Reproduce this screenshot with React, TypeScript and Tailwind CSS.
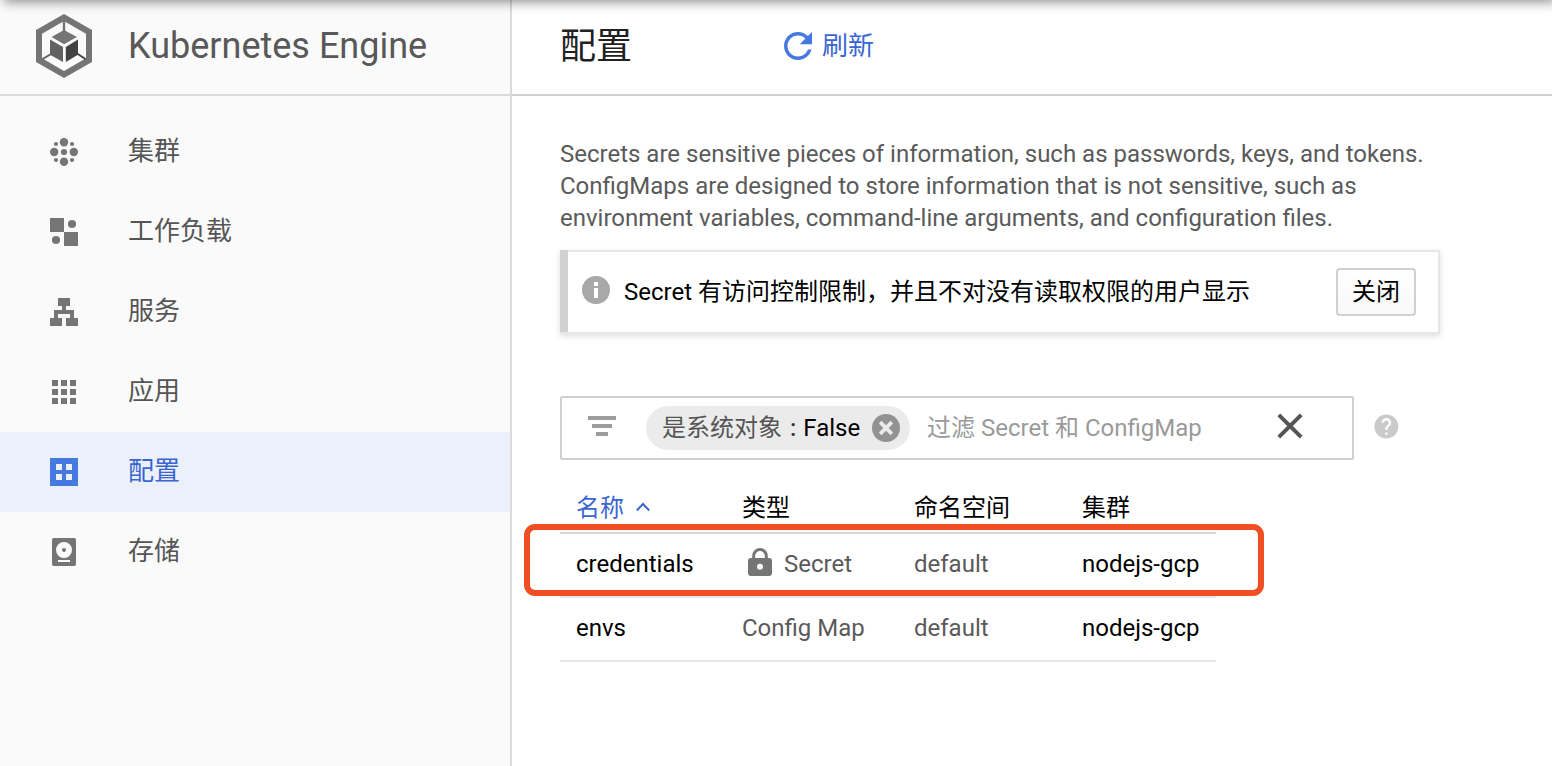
import type { ReactNode } from 'react';

const navItems: { label: string; active?: boolean; icon: ReactNode }[] = [
  {
    label: '集群',
    icon: (
      <>
        <circle cx="14" cy="4.2" r="4.2" />
        <circle cx="4.2" cy="14" r="4.2" />
        <circle cx="23.8" cy="14" r="4.2" />
        <circle cx="14" cy="23.8" r="4.2" />
        <circle cx="14" cy="14" r="3.1" />
        <circle cx="6" cy="6" r="2.1" />
        <circle cx="22" cy="6" r="2.1" />
        <circle cx="6" cy="22" r="2.1" />
        <circle cx="22" cy="22" r="2.1" />
      </>
    ),
  },
  {
    label: '工作负载',
    icon: (
      <>
        <path d="M0 0h14v14H0zM14 14h14v14H14z" />
        <circle cx="22" cy="6" r="4.1" />
        <circle cx="6" cy="22" r="4.1" />
      </>
    ),
  },
  {
    label: '服务',
    icon: <path d="M8 0h12v8h-4v4h8v8h4v8H16v-8h4v-4H8v4h4v8H0v-8h4v-8h8V8H8z" />,
  },
  {
    label: '应用',
    icon: (
      <path d="M2 2h6v6H2zM11 2h6v6h-6zM20 2h6v6h-6zM2 11h6v6H2zM11 11h6v6h-6zM20 11h6v6h-6zM2 20h6v6H2zM11 20h6v6h-6zM20 20h6v6h-6z" />
    ),
  },
  {
    label: '配置',
    active: true,
    icon: (
      <path
        fillRule="evenodd"
        d="M0 0h28v28H0zM6 6v6h6V6zM16 6v6h6V6zM6 16v6h6v-6zM16 16v6h6v-6z"
      />
    ),
  },
  {
    label: '存储',
    icon: (
      <path
        fillRule="evenodd"
        d="M4 0h20a2 2 0 0 1 2 2v24a2 2 0 0 1-2 2H4a2 2 0 0 1-2-2V2a2 2 0 0 1 2-2zM14 4a8 8 0 1 0 0 16a8 8 0 1 0 0-16zM14 10a2 2 0 1 1 0 4a2 2 0 1 1 0-4zM8 22v2h12v-2z"
      />
    ),
  },
];

function Logo() {
  return (
    <svg width="56" height="64" viewBox="0 0 56 64" className="shrink-0">
      <path
        fill="#757575"
        fillRule="evenodd"
        d="M28 0L56 16V48L28 64L0 48V16zM28 7L6 19.7V44.3L28 57L50 44.3V19.7z"
      />
      <path stroke="#757575" strokeWidth="2.4" d="M28 6v12" />
      <path stroke="#616161" strokeWidth="2" d="M16 39.5L6.5 45" />
      <path stroke="#424242" strokeWidth="2" d="M41 39.5L49.5 45" />
      <path fill="#757575" d="M28 16L41 23L28 30.3L15.5 23z" />
      <path fill="#616161" d="M14 25.5L27 33V48L14 40.7z" />
      <path fill="#424242" d="M42 25.5L29.8 33V48L42 40.7z" />
    </svg>
  );
}

function Sidebar() {
  return (
    <aside className="flex w-[512px] shrink-0 flex-col border-r-2 border-[#dadada] bg-[#fafafa]">
      <div className="flex h-24 items-center gap-9 border-b-2 border-[#dadada] pb-0.5 pl-9">
        <Logo />
        <span className="text-[36px] leading-none text-[#585858]">Kubernetes Engine</span>
      </div>
      <nav className="flex flex-col pt-4">
        {navItems.map((item) => (
          <a
            key={item.label}
            className={`flex h-20 items-center gap-[50px] pl-[50px] text-[26px] ${
              item.active ? 'bg-[#ebf0fa] text-[#3b66d1]' : 'text-[#555]'
            }`}
          >
            <svg
              width="28"
              height="28"
              viewBox="0 0 28 28"
              className={item.active ? 'fill-[#4579e0]' : 'fill-[#757575]'}
            >
              {item.icon}
            </svg>
            <span className="pb-0.5">{item.label}</span>
          </a>
        ))}
      </nav>
    </aside>
  );
}

function Banner() {
  return (
    <div className="mt-4 flex h-[84px] w-[880px] border-2 border-l-0 border-[#e6e6e6] shadow-[0_2px_6px_rgba(0,0,0,0.14)]">
      <div className="-mt-0.5 w-2 bg-[#d1d1d1]" />
      <div className="flex flex-1 items-center pr-[22px] pl-3.5">
        <svg width="28" height="28" viewBox="0 0 28 28" className="mr-3.5 -mt-1">
          <circle cx="14" cy="14" r="14" fill="#a8a8a8" />
          <path fill="#fff" d="M12 6h4v4h-4zM12 12h4v10h-4z" />
        </svg>
        <span className="flex-1 text-black">Secret 有访问控制限制，并且不对没有读取权限的用户显示</span>
        <button className="h-12 w-20 rounded border-2 border-[#d0d0d0] bg-linear-to-b from-white to-[#f8f8f8] leading-none text-black">
          关闭
        </button>
      </div>
    </div>
  );
}

function FilterBar() {
  return (
    <div className="mt-[62px] flex items-center">
      <div className="flex h-16 w-[794px] items-center rounded-[2px] border-2 border-[#d0d0d0] pl-[26px]">
        <svg width="28" height="20" viewBox="0 0 28 20" className="-mt-1 mr-[30px]" fill="#9c9c9c">
          <path d="M0 0h28v4H0zM4 8h20v4H4zM8 16h12v4H8z" />
        </svg>
        <div className="flex h-11 w-[264px] items-center rounded-full bg-[#ebebeb] pr-2.5 pl-4">
          <span className="flex flex-1 text-[#555]">
            是系统对象<span className="mr-[7px] ml-2 font-medium text-[#333]">:</span>
            <span className="text-black">False</span>
          </span>
          <svg width="28" height="28" viewBox="0 0 28 28">
            <circle cx="14" cy="14" r="14" fill="#929292" />
            <path stroke="#ebebeb" strokeWidth="3.8" d="M8.2 8.2L19.8 19.8M19.8 8.2L8.2 19.8" />
          </svg>
        </div>
        <span className="ml-[17px] flex-1 text-[#9a9a9a]">过滤 Secret 和 ConfigMap</span>
        <svg width="26" height="26" viewBox="0 0 26 26" className="mr-[49px] -mt-1">
          <path stroke="#555" strokeWidth="4" d="M1.8 1.8L24.2 24.2M24.2 1.8L1.8 24.2" />
        </svg>
      </div>
      <svg width="28.8" height="28.8" viewBox="0 0 24 24" className="-mt-1 ml-[17.6px]" fill="#cacaca">
        <path d="M12 2C6.48 2 2 6.48 2 12s4.480 10 10 10 10-4.480 10-10S17.520 2 12 2zm1 17h-2v-2h2v2zm2.070-7.750l-.9.920C13.450 12.900 13 13.500 13 15h-2v-.5c0-1.100.450-2.100 1.170-2.830l1.240-1.260c.370-.360.590-.860.590-1.410 0-1.100-.9-2-2-2s-2 .9-2 2H8c0-2.210 1.790-4 4-4s4 1.790 4 4c0 .880-.360 1.680-.930 2.250z" />
      </svg>
    </div>
  );
}

function LockIcon() {
  return (
    <svg width="24" height="28" viewBox="0 0 24 28" className="mr-3 -mt-1 ml-1.5">
      <path fill="none" stroke="#757575" strokeWidth="3" d="M5.700 11V7.800a6.300 6.300 0 0 1 12.600 0V11" />
      <path
        fill="#757575"
        fillRule="evenodd"
        d="M3 10h18a3 3 0 0 1 3 3v12a3 3 0 0 1-3 3H3a3 3 0 0 1-3-3V13a3 3 0 0 1 3-3zM12 15.800a3 3 0 1 0 0 6a3 3 0 1 0 0-6z"
      />
    </svg>
  );
}

const rows = [
  { name: 'credentials', type: 'Secret', locked: true, namespace: 'default', cluster: 'nodejs-gcp' },
  { name: 'envs', type: 'Config Map', locked: false, namespace: 'default', cluster: 'nodejs-gcp' },
];

function ConfigTable() {
  return (
    <div className="relative mt-[22px] w-[656px]">
      <div className="grid h-[52px] grid-cols-[166px_172px_168px_1fr] items-center border-b-2 border-[#d6d6d6] pt-0.5 pl-4 text-black">
        <span className="flex items-center gap-3 text-[#3b66d1]">
          名称
          <svg width="14" height="10" viewBox="0 0 14 10" fill="none" className="-mt-0.5">
            <path stroke="#3b66d1" strokeWidth="2" d="M.8 8.500L7 2l6.200 6.500" />
          </svg>
        </span>
        <span>类型</span>
        <span>命名空间</span>
        <span>集群</span>
      </div>
      {rows.map((row) => (
        <div
          key={row.name}
          className="grid h-16 grid-cols-[166px_172px_168px_1fr] items-center border-b-2 border-[#e8e8e8] pb-0.5 pl-4 text-[#5a5a5a]"
        >
          <span className="text-black">{row.name}</span>
          <span className="flex items-center">
            {row.locked && <LockIcon />}
            {row.type}
          </span>
          <span>{row.namespace}</span>
          <span className="text-black">{row.cluster}</span>
        </div>
      ))}
      <div className="pointer-events-none absolute top-[41.5px] -left-[36.5px] h-[72.5px] w-[740.5px] rounded-[11px] border-6 border-[#f04e23]" />
    </div>
  );
}

export default function App() {
  return (
    <div className="relative flex h-[766px] w-[1552px] overflow-hidden bg-white font-[Roboto,'Noto_Sans_CJK_SC',sans-serif] text-[24px] leading-8">
      <Sidebar />
      <div className="flex flex-1 flex-col">
        <header className="flex h-24 items-center border-b-2 border-[#d0d0d0] pl-12">
          <h1 className="w-[217px] text-[36px] leading-none text-[#212121]">配置</h1>
          <button className="flex items-center pb-0.5 text-[26px] text-[#3b66d1]">
            <svg width="42" height="42" viewBox="0 0 24 24" className="mr-[3px]" fill="#4579e0">
              <path d="M17.650 6.350C16.200 4.900 14.210 4 12 4c-4.420 0-7.990 3.580-7.990 8s3.570 8 7.990 8c3.730 0 6.840-2.550 7.730-6h-2.080c-.820 2.330-3.040 4-5.650 4-3.310 0-6-2.690-6-6s2.690-6 6-6c1.660 0 3.140.690 4.220 1.780L13 11h7V4l-2.350 2.350z" />
            </svg>
            刷新
          </button>
        </header>
        <main className="px-12 pt-[42px]">
          <p className="w-[880px] text-[#5a5a5a]">
            Secrets are sensitive pieces of information, such as passwords, keys, and tokens.
            ConfigMaps are designed to store information that is not sensitive, such as environment
            variables, command-line arguments, and configuration files.
          </p>
          <Banner />
          <FilterBar />
          <ConfigTable />
        </main>
      </div>
      <div className="pointer-events-none absolute -top-4 right-0 left-0 h-4 shadow-[4px_2px_12px_rgba(0,0,0,0.45)]" />
    </div>
  );
}
